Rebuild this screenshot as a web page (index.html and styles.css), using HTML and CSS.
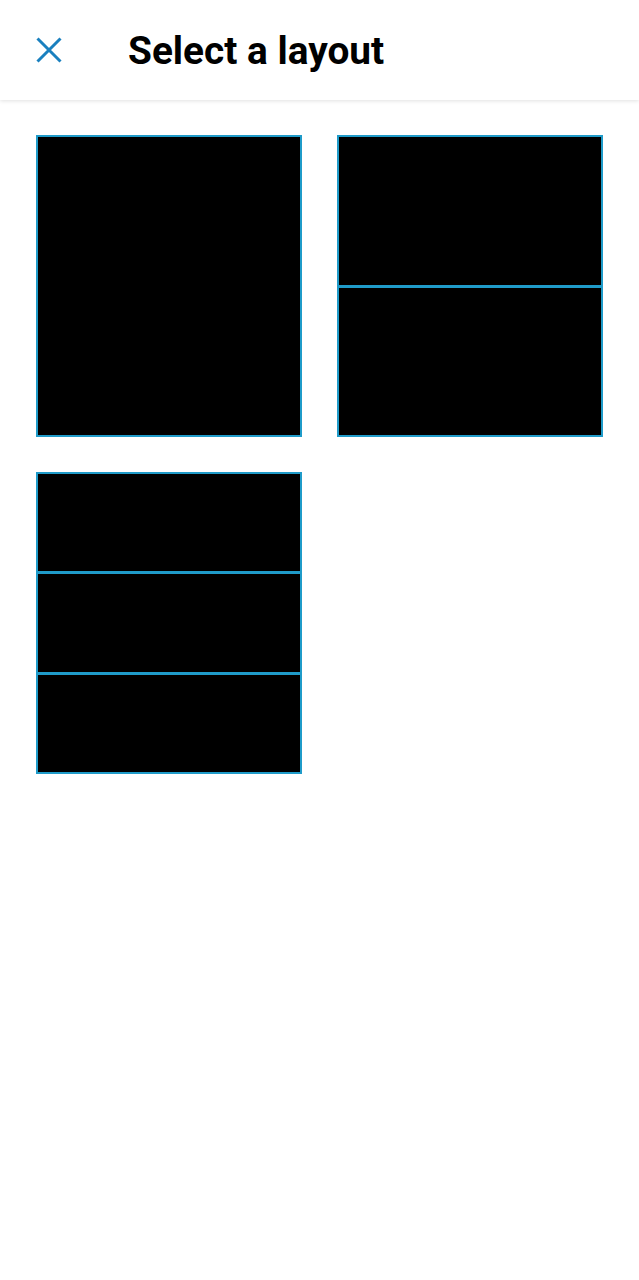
FILE: index.html
```html
<!DOCTYPE html>
<html>
<head>
<meta charset="utf-8">
<link rel="stylesheet" href="styles.css">
</head>
<body>
<header class="topbar">
  <button class="close" aria-label="Close">
    <svg width="26" height="26" viewBox="0 0 26 26"><path d="M1.5 1.5 L24.5 24.5 M24.5 1.5 L1.5 24.5" stroke="#1a80bf" stroke-width="3" fill="none"/></svg>
  </button>
  <h1 class="title">Select a layout</h1>
</header>
<main class="grid">
  <div class="layout l1"><div class="pane"></div></div>
  <div class="layout l2"><div class="pane"></div><div class="pane"></div></div>
  <div class="layout l3"><div class="pane"></div><div class="pane"></div><div class="pane"></div></div>
</main>
</body>
</html>
```
FILE: styles.css
```css
* { box-sizing: border-box; }
html, body { margin: 0; padding: 0; background: #fff; }
body { font-family: Roboto, "Noto Sans", sans-serif; }
.topbar {
  height: 100px;
  display: flex;
  align-items: center;
  padding-left: 36px;
  box-shadow: 0 1px 4px rgba(0,0,0,0.12);
  position: relative;
  background: #fff;
}
.close {
  border: 0; background: none; padding: 0;
  width: 26px; height: 26px;
  display: flex;
}
.title {
  margin: 0 0 0 66px;
  font-size: 38.8px;
  font-weight: 700;
  color: #000;
}
.grid {
  display: grid;
  grid-template-columns: 266px 266px;
  grid-auto-rows: 302px;
  gap: 35px 35px;
  padding: 35px 36px;
}
.layout {
  border: 2px solid #1f9bc9;
  display: flex;
  flex-direction: column;
  gap: 3px;
  background: #1f9bc9;
}
.pane { flex: 1; background: #000; }
```
